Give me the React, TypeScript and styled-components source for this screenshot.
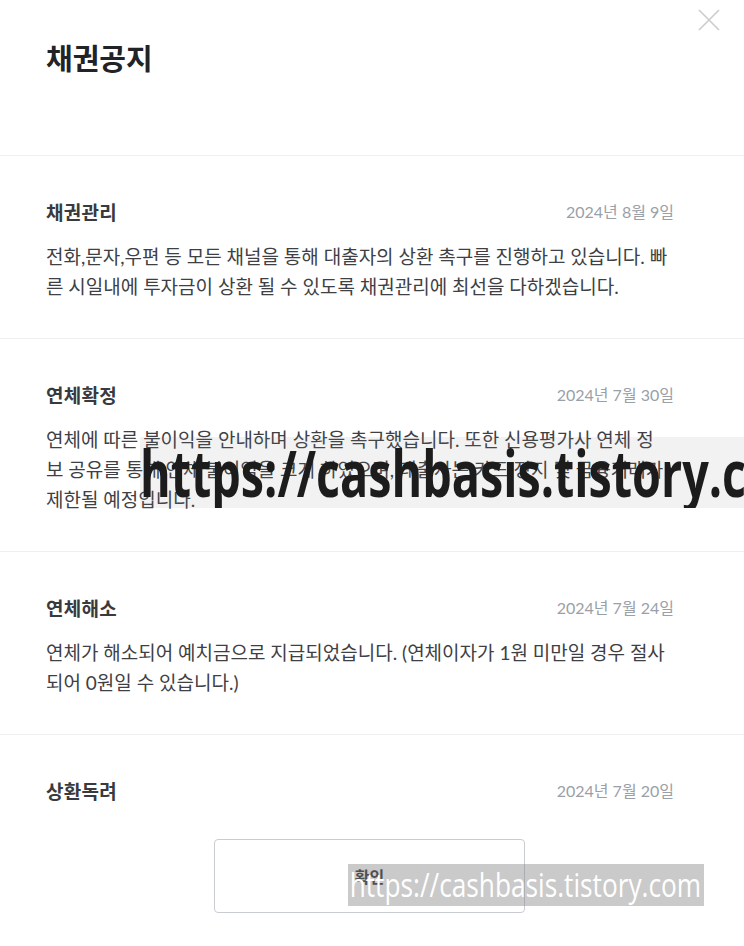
import React from "react";
import styled, { createGlobalStyle } from "styled-components";

const GlobalStyle = createGlobalStyle`
  html, body { margin: 0; padding: 0; background: #ffffff; }
  body { font-family: Lato, "Noto Sans CJK KR", sans-serif; }
  * { box-sizing: border-box; }
`;

const Modal = styled.div`
  position: relative;
  width: 744px;
  height: 946px;
  background: #ffffff;
  display: flex;
  flex-direction: column;
  overflow: hidden;
`;

const Header = styled.header`
  height: 156px;
  padding: 40px 46px 0;
  border-bottom: 1px solid #efefef;
  flex-shrink: 0;
`;

const Title = styled.h2`
  margin: 0;
  font-family: "Noto Sans CJK KR", sans-serif;
  font-size: 29px;
  line-height: 34px;
  font-weight: 700;
  color: #222326;
`;

const CloseButton = styled.button`
  position: absolute;
  top: 9px;
  left: 698px;
  width: 22px;
  height: 22px;
  padding: 0;
  border: none;
  background: transparent;
  display: flex;
`;

const List = styled.div`
  flex: 1;
  overflow: hidden;
`;

const Item = styled.section`
  padding: 43px 70px 36px 46px;
  border-bottom: 1px solid #efefef;
`;

const ItemHead = styled.div`
  display: flex;
  align-items: center;
  justify-content: space-between;
  height: 26px;
`;

const ItemTitle = styled.h3`
  margin: 0;
  font-family: "Noto Sans CJK KR", sans-serif;
  font-size: 19px;
  line-height: 26px;
  font-weight: 700;
  color: #383a3e;
  letter-spacing: 0.3px;
`;

const ItemDate = styled.span`
  font-family: Lato, "Noto Sans CJK KR", sans-serif;
  font-size: 16px;
  line-height: 26px;
  color: #9aa0a8;
`;

const ItemBody = styled.p`
  margin: 17px -40px 0 0;
  font-family: Lato, "Noto Sans CJK KR", sans-serif;
  font-size: 19px;
  line-height: 30px;
  color: #3e4044;
  white-space: pre-line;
  word-break: keep-all;
`;

const Footer = styled.footer`
  flex-shrink: 0;
  height: 131px;
  padding: 24px 5px 0 0;
  display: flex;
  justify-content: center;
  background: #ffffff;
`;

const ConfirmButton = styled.button`
  width: 311px;
  height: 74px;
  border: 1px solid #c9cdd3;
  border-radius: 4px;
  background: #ffffff;
  font-family: "Noto Sans CJK KR", sans-serif;
  font-size: 16px;
  font-weight: 700;
  color: #2a2c30;
  padding: 0;
`;

const WatermarkBig = styled.div`
  position: absolute;
  left: 140px;
  top: 437px;
  width: 604px;
  height: 71px;
  background: rgba(128, 128, 128, 0.1);
  overflow: hidden;
  pointer-events: none;
`;

const WatermarkBigText = styled.span`
  display: block;
  font-family: "Open Sans", sans-serif;
  font-weight: 700;
  font-size: 64px;
  line-height: 71px;
  color: #1c1c1c;
  white-space: nowrap;
  transform: scaleX(0.73);
  transform-origin: 0 0;
`;

const WatermarkSmall = styled.div`
  position: absolute;
  left: 348px;
  top: 864px;
  width: 356px;
  height: 42px;
  background: rgba(128, 128, 128, 0.42);
  overflow: hidden;
  pointer-events: none;
`;

const WatermarkSmallText = styled.span`
  display: block;
  padding-left: 2px;
  font-family: "Open Sans", sans-serif;
  font-weight: 400;
  font-size: 32px;
  line-height: 42px;
  color: #ffffff;
  white-space: nowrap;
  transform: scaleX(0.82);
  transform-origin: 0 0;
`;

type Notice = { title: string; date: string; body?: string };

const notices: Notice[] = [
  {
    title: "채권관리",
    date: "2024년 8월 9일",
    body:
      "전화,문자,우편 등 모든 채널을 통해 대출자의 상환 촉구를 진행하고 있습니다. 빠\n른 시일내에 투자금이 상환 될 수 있도록 채권관리에 최선을 다하겠습니다.",
  },
  {
    title: "연체확정",
    date: "2024년 7월 30일",
    body:
      "연체에 따른 불이익을 안내하며 상환을 촉구했습니다. 또한 신용평가사 연체 정\n보 공유를 통해 연체 불이익을 크게 하였으며, 대출자는 카드 정지 및 금융거래가\n제한될 예정입니다.",
  },
  {
    title: "연체해소",
    date: "2024년 7월 24일",
    body:
      "연체가 해소되어 예치금으로 지급되었습니다. (연체이자가 1원 미만일 경우 절사\n되어 0원일 수 있습니다.)",
  },
  {
    title: "상환독려",
    date: "2024년 7월 20일",
  },
];

export default function App() {
  return (
    <>
      <GlobalStyle />
      <Modal>
        <Header>
          <Title>채권공지</Title>
        </Header>
        <CloseButton aria-label="닫기">
          <svg width="22" height="22" viewBox="0 0 22 22">
            <path d="M1 1 L21 21 M21 1 L1 21" stroke="#cccccc" strokeWidth="1.6" fill="none" />
          </svg>
        </CloseButton>
        <List>
          {notices.map((n) => (
            <Item key={n.title}>
              <ItemHead>
                <ItemTitle>{n.title}</ItemTitle>
                <ItemDate>{n.date}</ItemDate>
              </ItemHead>
              {n.body && <ItemBody>{n.body}</ItemBody>}
            </Item>
          ))}
        </List>
        <Footer>
          <ConfirmButton>확인</ConfirmButton>
        </Footer>
        <WatermarkBig>
          <WatermarkBigText>https://cashbasis.tistory.com</WatermarkBigText>
        </WatermarkBig>
        <WatermarkSmall>
          <WatermarkSmallText>https://cashbasis.tistory.com</WatermarkSmallText>
        </WatermarkSmall>
      </Modal>
    </>
  );
}
